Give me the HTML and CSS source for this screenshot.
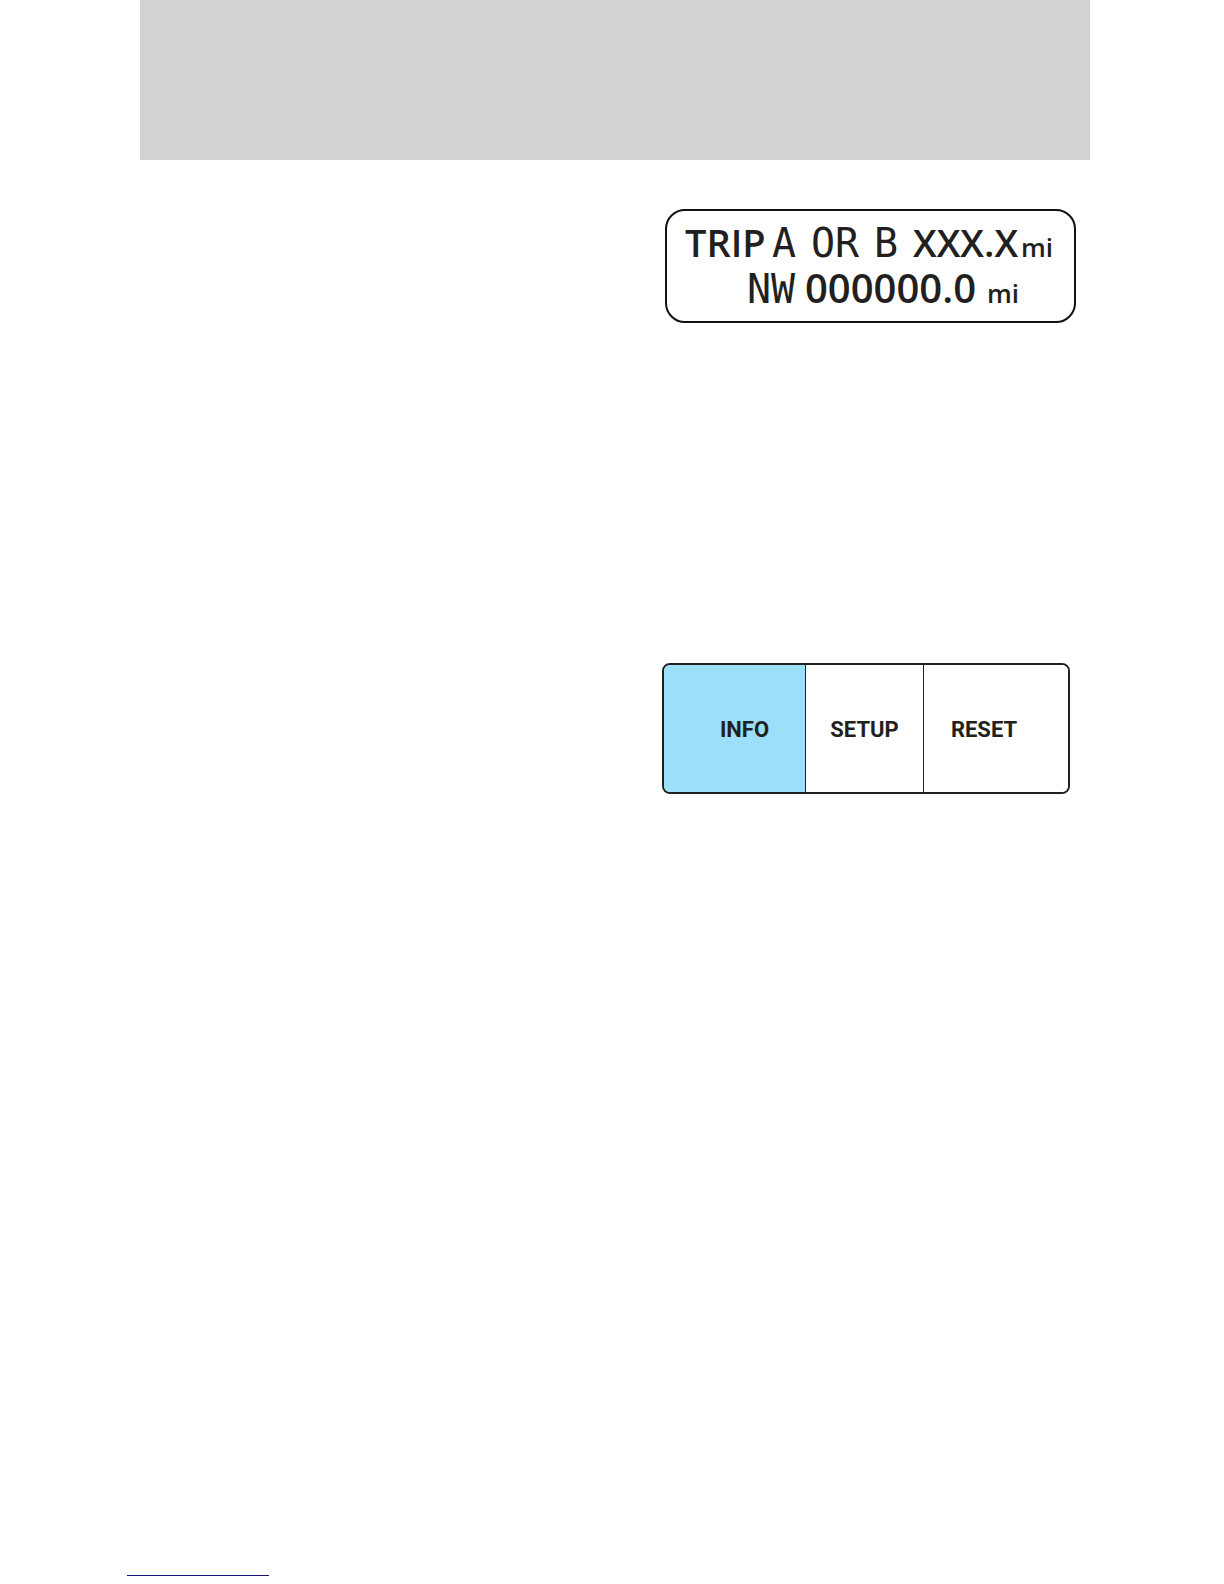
FILE: index.html
```html
<!DOCTYPE html>
<html lang="en">
<head>
<meta charset="utf-8">
<meta name="viewport" content="width=device-width, initial-scale=1">
<title>Message center</title>
<link rel="stylesheet" href="styles.css">
</head>
<body>
<div class="page">
  <header class="banner"></header>
  <main class="content">
    <section class="display" aria-label="Trip display">
      <div class="row row-trip">
        <span>TRIP</span><span class="mono">A</span><span class="mono">OR</span><span class="mono">B</span><span>XXX.X</span><span class="unit">mi</span>
      </div>
      <div class="row row-odometer">
        <span class="mono">NW</span><span class="digits">000000.0</span><span class="unit">mi</span>
      </div>
    </section>
    <div class="controls" role="group" aria-label="Message center controls">
      <button class="control active" type="button">INFO</button>
      <button class="control" type="button">SETUP</button>
      <button class="control" type="button">RESET</button>
    </div>
  </main>
  <footer class="footer"><a class="footer-link" href="#" aria-label="Top of page"></a></footer>
</div>
</body>
</html>
```
FILE: styles.css
```css
* { box-sizing: border-box; }
body {
  margin: 0;
  background: #fff;
  color: #231f20;
  font-family: Roboto, "Liberation Sans", sans-serif;
}
.page {
  display: flex;
  flex-direction: column;
  min-height: 100vh;
}
.banner {
  height: 160px;
  margin: 0 134px 0 140px;
  background: #d2d2d2;
}
.content {
  display: flex;
  flex: 1;
  flex-direction: column;
  align-items: flex-end;
  gap: 340px;
  padding: 49px 148px 0 140px;
}
.display {
  width: 411px;
  padding: 8px 18px 10px;
  border: 2px solid #111;
  border-radius: 20px;
  font-family: "Open Sans", "Noto Sans", sans-serif;
  font-weight: 600;
}
.row {
  display: grid;
  align-items: baseline;
  height: 46px;
  font-size: 38px;
  line-height: 46px;
  white-space: nowrap;
}
.row-trip { grid-template-columns: 87px 39px 63px 39px 108px auto; }
.row-odometer {
  grid-template-columns: 58px 182px auto;
  padding-left: 62px;
}
.mono {
  font-family: "DejaVu Sans Mono", monospace;
  font-size: 40px;
  font-weight: 400;
}
.digits { font-size: 40px; }
.unit {
  font-size: 26px;
  font-weight: 600;
}
.controls {
  display: grid;
  grid-template-columns: 142px 118px 1fr;
  width: 408px;
  height: 131px;
  margin-right: 6px;
  overflow: hidden;
  border: 2px solid #231f20;
  border-radius: 8px;
}
.control {
  padding: 2px 0 0;
  border: 0;
  border-right: 1px solid #231f20;
  background: #fff;
  color: inherit;
  font-family: inherit;
  font-size: 22px;
  font-weight: 700;
}
.control.active {
  padding-left: 20px;
  background: #9bdff9;
}
.control:last-child {
  padding-right: 24px;
  border-right: 0;
}
.footer { padding: 0 127px 8px; }
.footer-link {
  display: block;
  width: 142px;
  border-bottom: 1px solid #15157f;
}
```
